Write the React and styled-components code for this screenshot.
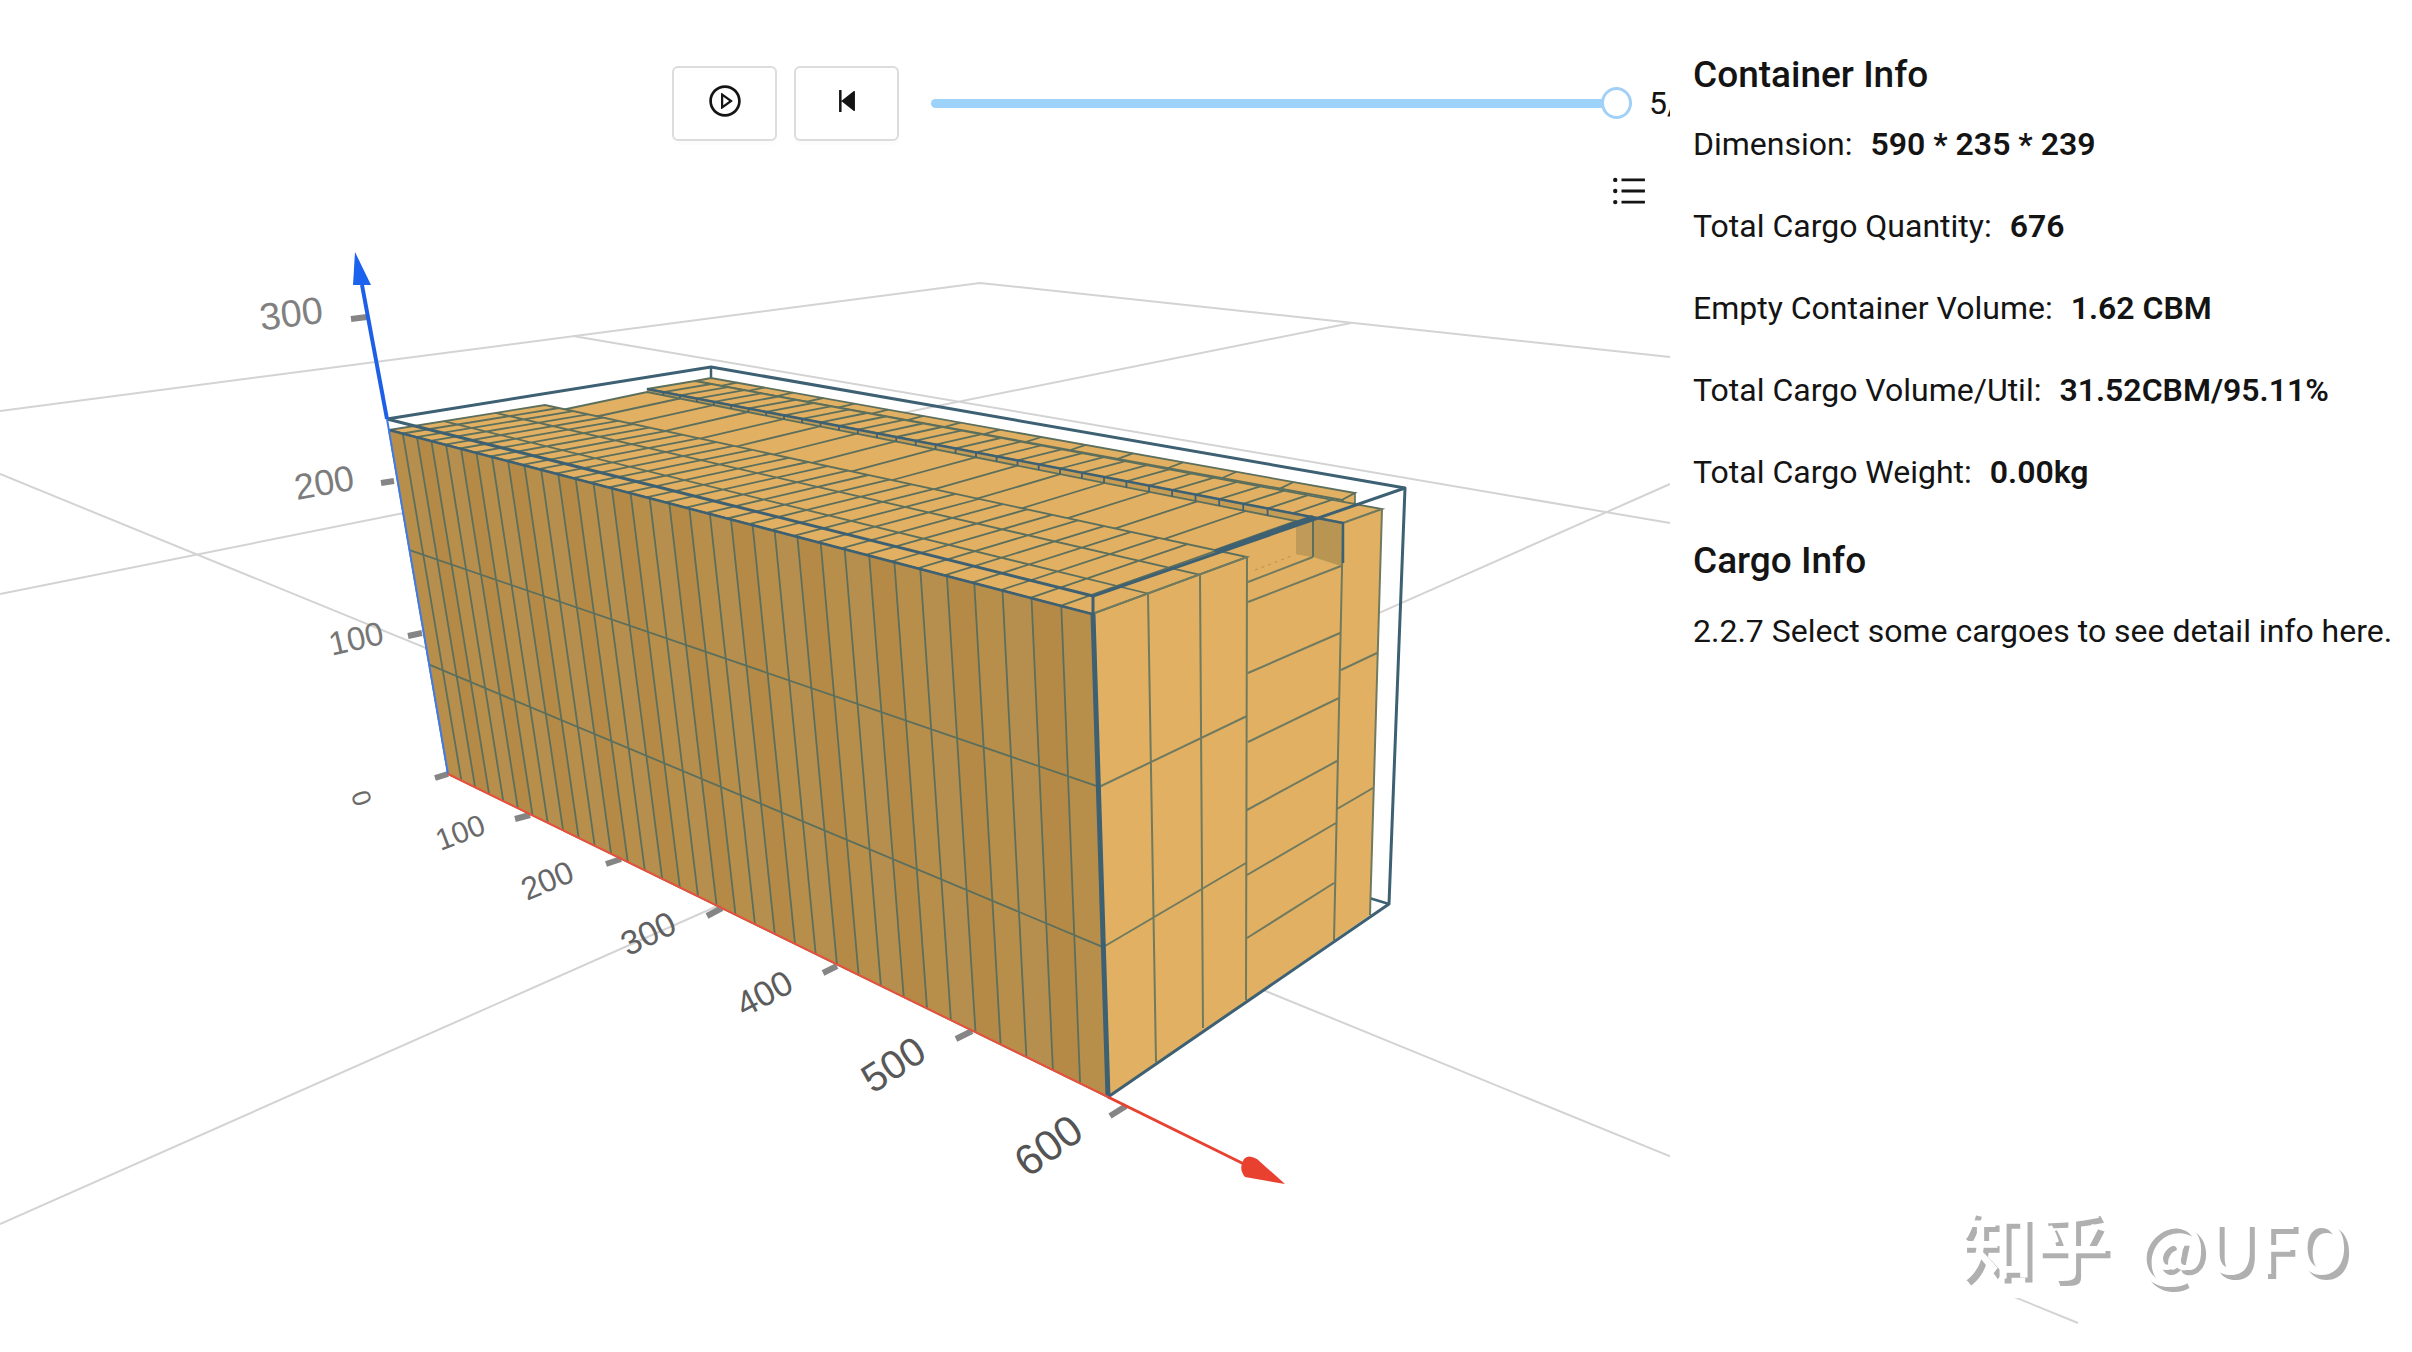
import React, { useState } from "react";
import styled, { createGlobalStyle } from "styled-components";
import {
  AiOutlinePlayCircle,
  AiOutlineStepBackward,
  AiOutlineUnorderedList,
} from "react-icons/ai";

const GlobalStyle = createGlobalStyle`
  *, *::before, *::after { box-sizing: border-box; }
  body {
    margin: 0;
    background: #fff;
    color: #141414;
    font-family: Roboto, "Liberation Sans", sans-serif;
    font-size: 32px;
  }
`;

/* ---------- page layout ---------- */

const Page = styled.main`
  position: relative;
  display: grid;
  grid-template-columns: minmax(0, 1fr) 742px;
  min-height: 100vh;
  overflow: hidden;
`;

const Scene = styled.svg`
  grid-column: 1 / -1;
  grid-row: 1;
  display: block;
  width: 100%;
  height: auto;
`;

const Workspace = styled.section`
  grid-column: 1;
  grid-row: 1;
  z-index: 1;
  display: flex;
  flex-direction: column;
  gap: 30px;
  padding-top: 66px;
`;

const Toolbar = styled.div`
  display: flex;
  align-items: center;
  gap: 17px;
  padding-left: 672px;
`;

const ToolButton = styled.button`
  display: flex;
  align-items: center;
  justify-content: center;
  width: 105px;
  height: 75px;
  padding: 0 0 6px;
  border: 2px solid #dcdcdc;
  border-radius: 6px;
  background: #fff;
  color: #141414;
  box-shadow: 0 4px 0 rgba(0, 0, 0, 0.01);
`;

const StepSlider = styled.input`
  flex: 1;
  min-width: 0;
  height: 32px;
  margin: 0 0 0 15px;
  appearance: none;
  background: transparent;

  &::-webkit-slider-runnable-track {
    height: 9px;
    border-radius: 5px;
    background: #9dd2fb;
  }

  &::-webkit-slider-thumb {
    appearance: none;
    width: 31px;
    height: 32px;
    margin-top: -12px;
    border: 3px solid #a3d0f7;
    border-radius: 50%;
    background: #fff;
  }
`;

const StepCount = styled.output`
  flex: none;
  width: 21px;
  overflow: hidden;
  white-space: nowrap;
  line-height: 38px;
  padding-bottom: 2px;
`;

const ListButton = styled.button`
  align-self: flex-end;
  display: flex;
  margin-right: 21px;
  padding: 0;
  border: 0;
  background: none;
  color: #141414;
`;

const Panel = styled.aside`
  grid-column: 2;
  grid-row: 1;
  z-index: 1;
  margin-bottom: 54px;
  padding: 49px 0 0 23px;
  background: #fff;
`;

const PanelTitle = styled.h2`
  margin: 0;
  font-size: 37px;
  font-weight: 500;
  line-height: 52px;
`;

const Facts = styled.dl`
  display: flex;
  flex-direction: column;
  gap: 33px;
  margin: 19px 0 38px;
`;

const Fact = styled.div`
  display: flex;
  gap: 18px;
  line-height: 49px;
  white-space: nowrap;
`;

const FactValue = styled.dd`
  margin: 0;
  font-weight: 600;
`;

const Hint = styled.p`
  margin: 20px 0 0;
  line-height: 49px;
  white-space: nowrap;
`;

const Watermark = styled.div`
  position: absolute;
  z-index: 2;
  right: 64px;
  bottom: 56px;
  display: flex;
  align-items: baseline;
  gap: 28px;
  color: #fff;
  font-family: "Noto Sans CJK SC", sans-serif;
  font-size: 75px;
  font-weight: 500;
  line-height: 104px;
  text-shadow: 5px 5px 0 #b0b0b0;
  white-space: nowrap;
`;

const Handle = styled.span`
  font-size: 70px;
`;

/* ---------- 3D scene ---------- */

const LIGHT = "#e2b062";
const FRAME = "#3d6072";
const EDGE = "#5c6f5c";

// Maps the unit square onto a quad given as [0,0] [1,0] [1,1] [0,1], with perspective.
function plane([a, b, c, d]) {
  const dx1 = b[0] - c[0];
  const dx2 = d[0] - c[0];
  const dy1 = b[1] - c[1];
  const dy2 = d[1] - c[1];
  const sx = a[0] - b[0] + c[0] - d[0];
  const sy = a[1] - b[1] + c[1] - d[1];
  const det = dx1 * dy2 - dx2 * dy1;
  const g = (sx * dy2 - dx2 * sy) / det;
  const h = (dx1 * sy - sx * dy1) / det;
  return (u, v) => {
    const w = g * u + h * v + 1;
    return [
      ((b[0] - a[0] + g * b[0]) * u + (d[0] - a[0] + h * d[0]) * v + a[0]) / w,
      ((b[1] - a[1] + g * b[1]) * u + (d[1] - a[1] + h * d[1]) * v + a[1]) / w,
    ];
  };
}

const toPath = (points) => "M" + points.map((p) => p.map((n) => n.toFixed(1)).join(" ")).join("L");

function GridFace({ corners, cols, rows, fill, stripes, width = 1.8 }) {
  const at = plane(corners);
  const lines = [];
  for (let i = 1; i < cols; i++) lines.push(toPath([at(i / cols, 0), at(i / cols, 1)]));
  for (let j = 1; j < rows; j++) lines.push(toPath([at(0, j / rows), at(1, j / rows)]));
  const bands = [];
  if (stripes) {
    for (let i = 0; i < cols; i++) {
      bands.push(
        toPath([at(i / cols, 0), at((i + 1) / cols, 0), at((i + 1) / cols, 1), at(i / cols, 1)]) + "Z"
      );
    }
  }
  return (
    <g>
      <path d={toPath(corners) + "Z"} fill={fill} stroke={EDGE} strokeWidth={width} />
      {bands.map((d, i) => (
        <path key={i} d={d} fill={stripes[i % stripes.length]} />
      ))}
      <path d={lines.join("")} fill="none" stroke={EDGE} strokeWidth={width} />
    </g>
  );
}

const SIDE = [[448, 774], [1108, 1097], [1092, 614], [389, 430]];
const TOP_NEAR = [[389, 430], [1092, 614], [1247, 557], [545, 405]];
const TOP_MIDDLE = [[557, 411], [1212, 551], [1296, 521], [647, 392]];
const TOP_FAR = [[647, 389], [1343, 523], [1382, 509], [695, 381]];
const TOP_BACK = [[695, 381], [1342, 500], [1355, 493], [711, 378]];

// The strip of side wall between the raised far rows and the middle row.
const LIP = "M647 389L1343 523L1296 521L647 392Z";
const lipTop = plane(TOP_FAR);
const LIP_TICKS = Array.from({ length: 31 }, (_, i) => {
  const [x, y] = lipTop((i + 1) / 34, 0);
  return `M${x.toFixed(1)} ${y.toFixed(1)}v${(3 + i * 0.13).toFixed(1)}`;
}).join("");

const GROUND = [
  "M0 411L980 283L1670 357",
  "M573 336L1670 523",
  "M0 594L1351 323",
  "M0 474L2078 1323",
  "M0 1224L1670 484",
];

const FRONT_EDGES = [
  "M1148 594L1156 1062M1200 575L1203 1028M1247 557L1246 1000",
  "M1343 523L1334 940M1382 509L1370 915",
  "M1099 787L1247 716M1105 946L1246 863",
  "M1341 670L1377 653M1337 809L1373 788",
  "M1248 582L1313 557M1248 602L1341 566M1248 673L1340 633M1248 742L1339 698",
  "M1247 810L1337 761M1247 875L1336 823M1247 938L1334 883",
  "M1092 614L1247 557M1343 523L1382 509",
];

const TICKS = [
  "M351 319L367 317", "M381 483L394 481", "M408 636L422 633", "M435 778L448 774",
  "M515 819L530 815", "M606 864L621 859", "M707 916L722 908", "M823 973L837 966",
  "M956 1039L972 1031", "M1110 1116L1126 1106",
];

const AXIS_LABELS = [
  { text: "300", x: 291, y: 313, turn: -7, size: 38, color: "#808080" },
  { text: "200", x: 324, y: 482, turn: -10, size: 36, color: "#7c7c7c" },
  { text: "100", x: 356, y: 638, turn: -13, size: 33, color: "#767676" },
  { text: "0", x: 362, y: 798, turn: 72, size: 26, color: "#6a6a6a" },
  { text: "100", x: 460, y: 832, turn: -21, size: 30, color: "#6a6a6a" },
  { text: "200", x: 547, y: 880, turn: -23, size: 32, color: "#666" },
  { text: "300", x: 648, y: 933, turn: -26, size: 34, color: "#606060" },
  { text: "400", x: 764, y: 993, turn: -28, size: 35, color: "#5c5c5c" },
  { text: "500", x: 893, y: 1064, turn: -33, size: 40, color: "#585858" },
  { text: "600", x: 1048, y: 1145, turn: -36, size: 43, color: "#545454" },
];

const AxisLabel = styled.text`
  font-family: "Liberation Sans", Arial, sans-serif;
  font-size: ${(p) => p.$size}px;
  fill: ${(p) => p.$color};
  text-anchor: middle;
`;

function ContainerScene() {
  return (
    <Scene viewBox="0 0 2412 1352" role="img" aria-label="Loaded container">
      <path d={GROUND.join("")} fill="none" stroke="#d3d3d3" strokeWidth="2" />

      <path d="M711 367V380M1366 897L1389 904" stroke={FRAME} strokeWidth="2.5" />

      <GridFace corners={TOP_BACK} cols={16} rows={1} fill={LIGHT} />
      <path d="M1342 500L1355 493V503L1348 506Z" fill={LIGHT} stroke={EDGE} strokeWidth="1.6" />
      <GridFace corners={TOP_FAR} cols={34} rows={1} fill={LIGHT} />
      <path
        d="M1092 614L1247 557L1215 550L1296 521L1343 523L1382 509L1370 915L1108 1097Z"
        fill={LIGHT}
      />
      <path d={LIP} fill="#c49c56" />
      <GridFace corners={TOP_MIDDLE} cols={16} rows={1} fill={LIGHT} />
      <path d="M1296 525L1313 518L1343 523L1341 566L1313 557L1296 554Z" fill="#b99554" />
      <path d="M1296 525L1313 518V557L1296 554Z" fill="#c09a58" />
      <path d="M1313 520V557" stroke={EDGE} strokeWidth="2" />
      <path d="M1255 570L1294 555" stroke="#b98f4c" strokeWidth="1" strokeDasharray="3 4" />
      <path d={LIP_TICKS} stroke={FRAME} strokeWidth="1.8" />
      <GridFace corners={TOP_NEAR} cols={34} rows={3} fill={LIGHT} />
      <GridFace
        corners={SIDE}
        cols={34}
        rows={3}
        fill="#b58d49"
        stripes={["#b78e4a", "#b68f4e", "#b48a46"]}
      />
      <path d={FRONT_EDGES.join("")} fill="none" stroke="#6f7a5f" strokeWidth="2" />

      <g fill="none" stroke={FRAME} strokeLinejoin="round">
        <path d="M387 419L711 367L1405 488L1389 904L1108 1097" strokeWidth="3" />
        <path d="M387 419L1093 596L1405 488" strokeWidth="3" />
        <path d="M389 430L1092 614M647 389L1343 523V563" strokeWidth="2.5" />
        <path d="M1215 552L1313 517" strokeWidth="4" />
        <path d="M1093 596V616" strokeWidth="3" />
        <path d="M1093 614L1108 1097" strokeWidth="5" />
      </g>

      <path d={TICKS.join("")} stroke="#858585" strokeWidth="6" />

      <path d="M362 285L387 419" stroke="#1d5fe6" strokeWidth="4" />
      <path d="M387 419L448 774" stroke="#3f7ae6" strokeWidth="2" />
      <path d="M355 252L353 285H371Z" fill="#1b63ee" />
      <path d="M448 774L1108 1097" stroke="#e8503c" strokeWidth="2" />
      <path d="M1108 1097L1246 1165" stroke="#e8412f" strokeWidth="3" />
      <path d="M1285 1184L1257 1159Q1248 1154 1244 1159Q1238 1169 1245 1177Z" fill="#e8412f" />

      {AXIS_LABELS.map((l) => (
        <AxisLabel
          key={l.x}
          $size={l.size}
          $color={l.color}
          dy="0.36em"
          transform={`translate(${l.x} ${l.y}) rotate(${l.turn})`}
        >
          {l.text}
        </AxisLabel>
      ))}
    </Scene>
  );
}

/* ---------- app ---------- */

const FACTS = [
  ["Dimension:", "590 * 235 * 239"],
  ["Total Cargo Quantity:", "676"],
  ["Empty Container Volume:", "1.62 CBM"],
  ["Total Cargo Volume/Util:", "31.52CBM/95.11%"],
  ["Total Cargo Weight:", "0.00kg"],
];

export default function App() {
  const [step, setStep] = useState(5);
  return (
    <>
      <GlobalStyle />
      <Page>
        <ContainerScene />
        <Workspace>
          <Toolbar>
            <ToolButton type="button" aria-label="Play">
              <AiOutlinePlayCircle size={36} />
            </ToolButton>
            <ToolButton type="button" aria-label="Step back">
              <AiOutlineStepBackward size={32} />
            </ToolButton>
            <StepSlider
              id="step"
              type="range"
              min="0"
              max="5"
              value={step}
              aria-label="Loading step"
              onChange={(e) => setStep(Number(e.target.value))}
            />
            <StepCount htmlFor="step">{step}/</StepCount>
          </Toolbar>
          <ListButton type="button" aria-label="Cargo list">
            <AiOutlineUnorderedList size={40} />
          </ListButton>
        </Workspace>
        <Panel>
          <PanelTitle>Container Info</PanelTitle>
          <Facts>
            {FACTS.map(([label, value]) => (
              <Fact key={label}>
                <dt>{label}</dt>
                <FactValue>{value}</FactValue>
              </Fact>
            ))}
          </Facts>
          <PanelTitle>Cargo Info</PanelTitle>
          <Hint>2.2.7 Select some cargoes to see detail info here.</Hint>
        </Panel>
        <Watermark>
          <span>知乎</span>
          <Handle>@UFO</Handle>
        </Watermark>
      </Page>
    </>
  );
}
